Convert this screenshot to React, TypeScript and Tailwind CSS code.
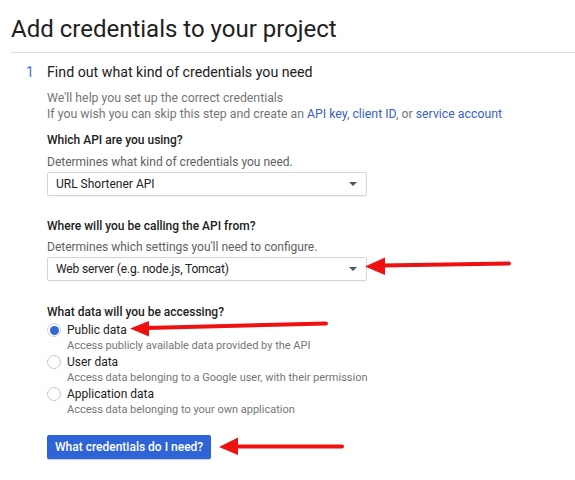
import React from "react";

function Select({ value, tight }: { value: string; tight?: boolean }) {
  return (
    <div className="w-[320px] h-[24px] border border-[#d6d6d6] rounded-[2px] bg-white flex items-center justify-between pl-[8px] pr-[9px] shadow-[0_1px_1px_rgba(0,0,0,0.05)]">
      <span className={tight ? "text-[12px] text-[#212121] leading-[16px] tracking-[-0.15px]" : "text-[12px] text-[#212121] leading-[16px]"}>{value}</span>
      <svg width="8" height="4" viewBox="0 0 8 4">
        <polygon points="0,0 8,0 4,4" fill="#555" />
      </svg>
    </div>
  );
}

function Radio({ checked, label, desc }: { checked?: boolean; label: string; desc: string }) {
  return (
    <div className="flex flex-col">
      <div className="flex items-center h-[16px]">
        <div
          className={
            checked
              ? "w-[14px] h-[14px] rounded-full border border-[#c7d2ee] bg-white flex items-center justify-center"
              : "w-[14px] h-[14px] rounded-full border border-[#c6c6c6] bg-white"
          }
        >
          {checked && <div className="w-[9px] h-[9px] rounded-full bg-[#3367d6]" />}
        </div>
        <span className="ml-[6px] text-[12px] text-[#212121] leading-[16px]">{label}</span>
      </div>
      <div className="pl-[20px] text-[11px] text-[#757575] leading-[16px]">{desc}</div>
    </div>
  );
}

export default function App() {
  return (
    <div
      className="relative w-[575px] h-[480px] bg-white overflow-hidden"
      style={{ fontFamily: "Roboto, 'Liberation Sans', sans-serif" }}
    >
      <div className="pl-[11px]">
        <div className="pt-[13px] h-[53px] border-b border-[#dadada]">
          <h1 className="text-[24px] leading-[32px] text-[#212121] font-normal">
            Add credentials to your project
          </h1>
        </div>
      </div>

      <div className="flex pl-[26px] pt-[9px]">
        <div className="w-[21px] text-[14px] leading-[20px] text-[#4a6dd0]">1</div>
        <div className="flex flex-col">
          <div className="text-[14.2px] leading-[20px] text-[#212121]">
            Find out what kind of credentials you need
          </div>
          <div className="mt-[8px] text-[12.3px] leading-[16px] text-[#757575]">
            <div>We'll help you set up the correct credentials</div>
            <div>
              If you wish you can skip this step and create an{" "}
              <span className="text-[#3b5fc4]">API key</span>,{" "}
              <span className="text-[#3b5fc4]">client ID</span>, or{" "}
              <span className="text-[#3b5fc4]">service account</span>
            </div>
          </div>

          <div className="mt-[10px] text-[12px] leading-[16px] font-medium text-[#212121]">
            Which API are you using?
          </div>
          <div className="mt-[6px] text-[12px] leading-[16px] text-[#616161]">
            Determines what kind of credentials you need.
          </div>
          <div className="mt-[2px]">
            <Select value="URL Shortener API" />
          </div>

          <div className="mt-[22px] text-[12px] leading-[16px] font-medium text-[#212121]">
            Where will you be calling the API from?
          </div>
          <div className="mt-[5px] text-[12px] leading-[16px] text-[#616161]">
            Determines which settings you'll need to configure.
          </div>
          <div className="mt-[2px]">
            <Select value="Web server (e.g. node.js, Tomcat)" tight />
          </div>

          <div className="mt-[23px] text-[12px] leading-[16px] font-medium text-[#212121]">
            What data will you be accessing?
          </div>
          <div className="mt-[2px] flex flex-col">
            <Radio checked label="Public data" desc="Access publicly available data provided by the API" />
            <Radio label="User data" desc="Access data belonging to a Google user, with their permission" />
            <Radio label="Application data" desc="Access data belonging to your own application" />
          </div>

          <div className="mt-[16px]">
            <button className="h-[24px] px-[8px] rounded-[2px] bg-[#2f64d6] text-white text-[12px] font-medium leading-[16px] shadow-[0_1px_1px_rgba(0,0,0,0.2)]">
              What credentials do I need?
            </button>
          </div>
        </div>
      </div>

      <svg className="absolute inset-0 pointer-events-none" width="575" height="480" viewBox="0 0 575 480">
        <g fill="#ee1111" stroke="#ee1111">
          <line x1="382" y1="265.5" x2="509" y2="263.5" strokeWidth="4" strokeLinecap="round" />
          <polygon points="365,266.5 385,257.5 385,275" strokeWidth="0" />
          <line x1="146" y1="328" x2="326" y2="323.5" strokeWidth="4" strokeLinecap="round" />
          <polygon points="130,328.5 149,321 149,336.5" strokeWidth="0" />
          <line x1="236" y1="446.5" x2="342" y2="446.5" strokeWidth="4" strokeLinecap="round" />
          <polygon points="219,447 238,437.5 238,455" strokeWidth="0" />
        </g>
      </svg>
    </div>
  );
}
